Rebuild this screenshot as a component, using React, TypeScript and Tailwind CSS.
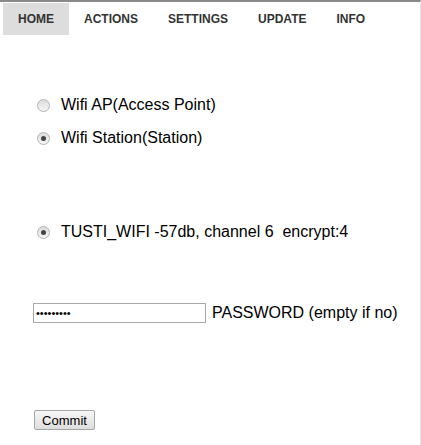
import { useState } from 'react'

const tabs = ['HOME', 'ACTIONS', 'SETTINGS', 'UPDATE', 'INFO']

function Radio({ checked, label, onClick }: { checked: boolean; label: string; onClick: () => void }) {
  return (
    <label className="flex h-6 items-center cursor-default" onClick={onClick}>
      <span className="ml-[37px] mr-[11px] flex h-[13px] w-[13px] items-center justify-center rounded-full border border-[#b4b4b4] bg-gradient-to-b from-[#dcdcdc] to-[#f6f6f6]">
        {checked && <span className="h-[5px] w-[5px] rounded-full bg-[#444]" />}
      </span>
      <span className="whitespace-pre text-[16px] text-black">{label}</span>
    </label>
  )
}

export default function App() {
  const [mode, setMode] = useState('station')
  const [active] = useState('HOME')

  return (
    <div className="h-[445px] w-[421px] border-t-2 border-r border-t-[#8a8a8a] border-r-[#e4e4e4] bg-white font-['Liberation_Sans',Arial,sans-serif]">
      <nav className="flex pl-[3px] pt-px">
        {tabs.map(t => (
          <div
            key={t}
            className={`flex h-8 items-center px-[15px] text-[12px] font-bold text-[#333] ${t === active ? 'bg-[#dddddd]' : ''}`}
          >
            {t}
          </div>
        ))}
      </nav>

      <div className="mt-[58px] flex flex-col gap-[9px]">
        <Radio checked={mode === 'ap'} label="Wifi AP(Access Point)" onClick={() => setMode('ap')} />
        <Radio checked={mode === 'station'} label="Wifi Station(Station)" onClick={() => setMode('station')} />
      </div>

      <div className="mt-[70px]">
        <Radio checked label="TUSTI_WIFI -57db, channel 6  encrypt:4" onClick={() => {}} />
      </div>

      <div className="mt-[57px] ml-[33px] flex h-6 items-center">
        <input
          type="password"
          defaultValue="123456789"
          className="h-5 w-[173px] border border-[#a9a9a9] px-[2px] text-[11px] outline-none"
        />
        <span className="ml-[6px] text-[16px] text-black">PASSWORD (empty if no)</span>
      </div>

      <div className="mt-[85px] ml-[34px] flex">
        <button className="h-5 w-[61px] rounded-[2px] border border-[#a6a6a6] bg-gradient-to-b from-[#f6f6f6] to-[#dedede] text-[13px] text-black">
          Commit
        </button>
      </div>
    </div>
  )
}
